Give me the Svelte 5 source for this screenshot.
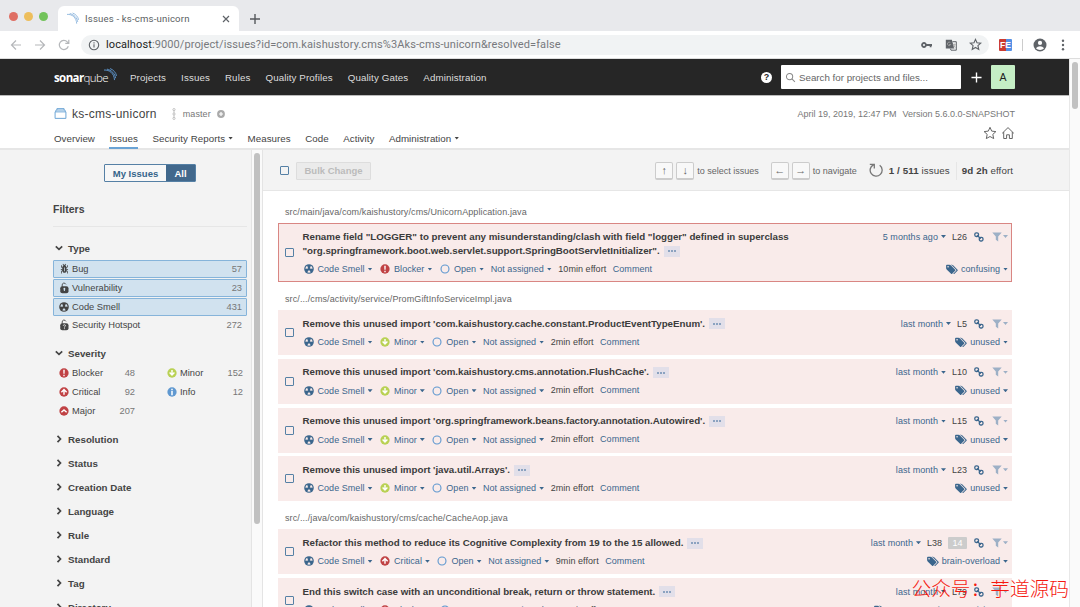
<script>
  const navItems = ['Projects', 'Issues', 'Rules', 'Quality Profiles', 'Quality Gates', 'Administration']

  const tabs = [
    { label: 'Overview' },
    { label: 'Issues', active: true },
    { label: 'Security Reports', menu: true },
    { label: 'Measures' },
    { label: 'Code' },
    { label: 'Activity' },
    { label: 'Administration', menu: true }
  ]

  const types = [
    { icon: 'bug', label: 'Bug', count: 57, active: true },
    { icon: 'vulnerability', label: 'Vulnerability', count: 23, active: true },
    { icon: 'smell', label: 'Code Smell', count: 431, active: true },
    { icon: 'hotspot', label: 'Security Hotspot', count: 272, active: false }
  ]

  const severities = [
    [
      { label: 'Blocker', count: 48 },
      { label: 'Critical', count: 92 },
      { label: 'Major', count: 207 }
    ],
    [
      { label: 'Minor', count: 152 },
      { label: 'Info', count: 12 }
    ]
  ]

  const facets = ['Resolution', 'Status', 'Creation Date', 'Language', 'Rule', 'Standard', 'Tag', 'Directory']

  const unused = (name, line) => ({
    lines: [`Remove this unused import '${name}'.`],
    severity: 'Minor', effort: '2min', age: 'last month', line, tag: 'unused'
  })

  const groups = [
    {
      path: 'src/main/java/com/kaishustory/cms/UnicornApplication.java',
      issues: [
        {
          lines: [
            'Rename field "LOGGER" to prevent any misunderstanding/clash with field "logger" defined in superclass',
            '"org.springframework.boot.web.servlet.support.SpringBootServletInitializer".'
          ],
          severity: 'Blocker', effort: '10min', age: '5 months ago', line: 'L26', tag: 'confusing', selected: true
        }
      ]
    },
    {
      path: 'src/.../cms/activity/service/PromGiftInfoServiceImpl.java',
      issues: [
        unused('com.kaishustory.cache.constant.ProductEventTypeEnum', 'L5'),
        unused('com.kaishustory.cms.annotation.FlushCache', 'L10'),
        unused('org.springframework.beans.factory.annotation.Autowired', 'L15'),
        unused('java.util.Arrays', 'L23')
      ]
    },
    {
      path: 'src/.../java/com/kaishustory/cms/cache/CacheAop.java',
      issues: [
        {
          lines: ['Refactor this method to reduce its Cognitive Complexity from 19 to the 15 allowed.'],
          severity: 'Critical', effort: '9min', age: 'last month', line: 'L38', flows: 14, tag: 'brain-overload'
        },
        {
          lines: ['End this switch case with an unconditional break, return or throw statement.'],
          severity: 'Blocker', effort: '10min', age: 'last month', line: 'L79', tag: 'cert, cwe, misra, suspicious'
        }
      ]
    }
  ]
</script>

{#snippet typeIcon(name)}
  <svg class="icon" viewBox="0 0 16 16" fill="currentColor">
    {#if name === 'bug'}
      <path d="M11 9h1.3l.5.8.8-.5-.8-1.3H11v-.3l2-2.3V3h-1v2l-1 1.2V5c-.1-.8-.7-1.5-1.4-1.9L11 1.8l-.7-.7-1.8 1.6-1.8-1.6-.7.7 1.5 1.3C6.7 3.5 6.1 4.2 6 5v1.1L5 5V3H4v2.3l2 2.3V8H4.2l-.7 1.2.8.5.4-.7H6v.3l-2 1.9V14h1v-2.4l1-1C6 12 7.1 13 8.4 13h.8c.7 0 1.4-.3 1.8-.9.3-.4.3-.9.2-1.4l.9.9V14h1v-2.8l-2-1.9V9zm-2 2H8V6h1v5z" />
    {:else if name === 'smell'}
      <circle cx="8" cy="8" r="6.4" />
      <path class="cut" d="M6.9 7.3 5.5 3.7A5 5 0 0 0 3.2 7.8zM9.1 7.3l1.4-3.600a5 5 0 0 1 2.300 4.100zM8 9.200l-2.400 3.200a5 5 0 0 0 4.800 0z" />
      <circle cx="8" cy="8" r="1" />
    {:else}
      <path d="M5.6 6.2V3.9a2.5 2.5 0 0 1 4.7-1.2" fill="none" stroke="currentColor" stroke-width="1.2" stroke-linecap="round" />
      <rect x="3" y="5.5" width="11" height="9.5" rx="2.8" />
      {#if name === 'vulnerability'}
        <path class="cut" d="M8.5 7.8a1.3 1.3 0 0 1 .7 2.4V12H7.8v-1.8a1.3 1.3 0 0 1 .7-2.4z" />
      {:else}
        <path d="M7 9q.1-1.4 1.5-1.4T10 9q0 .8-1.4 1.5v.9M8.6 12.300v1.200" fill="none" stroke="#f3f3f3" stroke-width="1.1" />
      {/if}
    {/if}
  </svg>
{/snippet}

{#snippet severityIcon(name)}
  <svg class="icon" viewBox="0 0 16 16">
    {#if name === 'Blocker'}
      <circle cx="8" cy="8" r="6.2" fill="#c04244" />
      <path d="M7 3.5h2L8.8 9H7.2zM7.1 10.3h1.8v1.9H7.1z" fill="#fff" />
    {:else if name === 'Critical'}
      <circle cx="8" cy="8" r="6.2" fill="#c04244" />
      <path d="M4.5 8.3 8 4.8l3.5 3.5M8 5.5v6.3" fill="none" stroke="#fff" stroke-width="1.9" />
    {:else if name === 'Major'}
      <circle cx="8" cy="8" r="6.2" fill="#c04244" />
      <path d="M4.5 9.7 8 6.7l3.5 3" fill="none" stroke="#fff" stroke-width="2" />
    {:else if name === 'Minor'}
      <circle cx="8" cy="8" r="6.2" fill="#b9d154" />
      <path d="M4.8 7.4 8 10.600l3.200-3.200M8 4v6" fill="none" stroke="#fff" stroke-width="1.900" />
    {:else}
      <circle cx="8" cy="8" r="6.2" fill="#5f98d0" />
      <path d="M7 3.8h2v1.8H7zM7 6.8h2v5.4H7z" fill="#fff" />
    {/if}
  </svg>
{/snippet}

{#snippet waves()}
  <svg class="waves" viewBox="0 0 14 14" fill="none" stroke="#5f98d0" stroke-width="1">
    <path d="M0 2.2C6 1.7 11 6 11.3 13" />
    <path d="M3.2 1.2C8 2.3 12 6.2 12.5 11" />
    <path d="M6.5.6C10 1.8 13 5 13.5 8.5" />
  </svg>
{/snippet}

<div class="window">
  <div class="tab-strip">
    <div class="lights"><i class="red"></i><i class="yellow"></i><i class="green"></i></div>
    <div class="browser-tab">
      {@render waves()}
      <span>Issues - ks-cms-unicorn</span>
      <svg class="close" viewBox="0 0 8 8"><path d="M1 1l6 6M7 1 1 7" /></svg>
    </div>
    <svg class="new-tab" viewBox="0 0 10 10"><path d="M5 0v10M0 5h10" /></svg>
  </div>

  <div class="address-bar">
    <div class="history">
      <svg viewBox="0 0 12 12"><path d="M11 6H1.5M6 1.5 1.5 6 6 10.5" /></svg>
      <svg viewBox="0 0 12 12"><path d="M1 6h9.5M6 1.5 10.5 6 6 10.5" /></svg>
      <svg viewBox="0 0 12 12"><path d="M10.3 7.3A4.6 4.6 0 1 1 9.3 2.8l1.2 1.2M10.8.8v3.5H7.3" /></svg>
    </div>
    <div class="url">
      <svg class="info" viewBox="0 0 12 12"><circle cx="6" cy="6" r="4.7" /><path d="M6 5.3v3.2M6 3.3v1.1" /></svg>
      <span class="address"><b>localhost</b>:9000/project/issues?id=com.kaishustory.cms%3Aks-cms-unicorn&resolved=false</span>
      <svg class="key" viewBox="0 0 12 8"><circle cx="3" cy="4" r="2" /><path d="M5 4h6M9.6 4v2.2" /></svg>
      <svg class="translate" viewBox="0 0 12 12">
        <path d="M.8.8h6l2.6 8.7H.8z" fill="#5f6368" />
        <path d="M7.5 2.7h3.8v8.5H6l-.6-1.5" fill="none" stroke="#5f6368" />
        <path d="M5.4 3.7a1.7 1.7 0 1 0 .3 1.8H4.1M7.8 5.5h2.8M9.2 4.5v1M10 5.7Q9.5 7.5 8.3 8.5M8.5 6.5l1.8 2" fill="none" stroke="#aaa" stroke-width=".8" />
      </svg>
      <svg class="bookmark" viewBox="0 0 14 14"><path d="m7 1.5 1.6 3.7 4 .4-3 2.7.9 4L7 10.2l-3.5 2.1.9-4-3-2.7 4-.4z" /></svg>
    </div>
    <div class="extension">FE</div>
    <span class="divider"></span>
    <svg class="avatar" viewBox="0 0 14 14">
      <circle cx="7" cy="7" r="6.5" fill="#5f6368" />
      <circle cx="7" cy="4.9" r="2.1" fill="#fff" />
      <path d="M2.9 10.3Q4.5 8.2 7 8.2t4.1 2.1Q9.5 12.1 7 12.1t-4.1-1.8z" fill="#fff" />
    </svg>
    <svg class="kebab" viewBox="0 0 4 12" fill="#5f6368"><circle cx="2" cy="1.7" r="1.2" /><circle cx="2" cy="6" r="1.2" /><circle cx="2" cy="10.3" r="1.2" /></svg>
  </div>

  <div class="viewport">
    <div class="page">
      <nav class="global-nav">
        <div class="logo"><b>sonar</b><span>qube</span>{@render waves()}</div>
        {#each navItems as item}
          <a href="#nav">{item}</a>
        {/each}
        <span class="help">?</span>
        <div class="search">
          <svg viewBox="0 0 12 12"><circle cx="5" cy="5" r="3.4" /><path d="m7.6 7.6 3.2 3.2" /></svg>
          <span>Search for projects and files...</span>
        </div>
        <svg class="plus" viewBox="0 0 12 12"><path d="M6 .5v11M.5 6h11" /></svg>
        <div class="user">A</div>
      </nav>

      <header class="project">
        <div class="project-top">
          <svg class="project-icon" viewBox="0 0 12 12"><path d="M1 4.5h10v6H1zM1.5 4.5l.4-1.700h8.200l.4 1.700M2.700 2.700V1.500h6.600v1.200" /></svg>
          <span class="name">ks-cms-unicorn</span>
          <svg class="branch" viewBox="0 0 6 12"><circle cx="3" cy="1.6" r="1.1" /><circle cx="3" cy="6" r="1.1" /><circle cx="3" cy="10.4" r="1.1" /><path d="M3 2.7v2.2M3 7.1v2.2" /></svg>
          <span class="branch-name">master</span>
          <svg class="branch-add" viewBox="0 0 8 8"><circle cx="4" cy="4" r="3.9" /><path d="M4 2v4M2 4h4" /></svg>
          <span class="version">April 19, 2019, 12:47 PM<span>Version 5.6.0.0-SNAPSHOT</span></span>
        </div>
        <div class="project-tabs">
          {#each tabs as tab}
            <a href="#tab" class:active={tab.active}>{tab.label}{#if tab.menu}<i class="caret"></i>{/if}</a>
          {/each}
          <div class="project-actions">
            <svg viewBox="0 0 14 14"><path d="m7 1.3 1.7 3.8 4.2.5-3.1 2.8.9 4.2L7 10.5l-3.7 2.1.9-4.2L1.1 5.6l4.2-.5z" /></svg>
            <svg viewBox="0 0 14 14"><path d="M1.2 7.3 7 1.6l5.8 5.7M2.7 6v6.5h2.9V8.8h2.8v3.7h2.9V6" /></svg>
          </div>
        </div>
      </header>

      <div class="body">
        <aside>
          <div class="toggle"><button>My Issues</button><button class="on">All</button></div>
          <h2>Filters</h2>
          <h3><svg class="chevron" viewBox="0 0 8 8"><path d="m.8 2.3 3.2 3 3.2-3" /></svg>Type</h3>
          <ul class="types">
            {#each types as type}
              <li class:active={type.active}>{@render typeIcon(type.icon)}{type.label}<em>{type.count}</em></li>
            {/each}
          </ul>
          <h3><svg class="chevron" viewBox="0 0 8 8"><path d="m.8 2.3 3.2 3 3.2-3" /></svg>Severity</h3>
          <div class="severities">
            {#each severities as column}
              <ul>
                {#each column as item}
                  <li>{@render severityIcon(item.label)}{item.label}<em>{item.count}</em></li>
                {/each}
              </ul>
            {/each}
          </div>
          {#each facets as facet}
            <h3 class="closed"><svg class="chevron" viewBox="0 0 8 8"><path d="m2.5.8 3 3.2-3 3.2" /></svg>{facet}</h3>
          {/each}
        </aside>
        <div class="side-scroll"><i></i></div>

        <main>
          <div class="toolbar">
            <i class="checkbox"></i>
            <button class="bulk" disabled>Bulk Change</button>
            <div class="keys">
              <kbd>↑</kbd><kbd>↓</kbd><span>to select issues</span>
              <kbd class="left">←</kbd><kbd>→</kbd><span>to navigate</span>
            </div>
            <svg class="reload" viewBox="0 0 14 14"><path d="M10.7 2.3a6 6 0 1 1-6.3-.5M.8 1.4h4.5v4.2" /></svg>
            <span class="total"><b>1 / 511</b> issues</span>
            <span class="effort-total"><b>9d 2h</b> effort</span>
          </div>

          <div class="list">
            {#each groups as group}
              <p class="path">{group.path}</p>
              {#each group.issues as issue}
                <article class:selected={issue.selected}>
                  <i class="checkbox"></i>
                  <div class="content">
                    <div class="row">
                      <div class="message">
                        {#each issue.lines as line, i}
                          <div>{line}{#if i === issue.lines.length - 1}<span class="more"><i></i><i></i><i></i></span>{/if}</div>
                        {/each}
                      </div>
                      <div class="side">
                        <span class="link">{issue.age}<i class="caret"></i></span>
                        <span>{issue.line}</span>
                        {#if issue.flows}<span class="flows">{issue.flows}</span>{/if}
                        <svg class="chain" viewBox="0 0 10 10"><rect x=".8" y=".8" width="3.7" height="3.7" rx="1.5" /><rect x="5.3" y="5.3" width="3.7" height="3.7" rx="1.5" /><path d="m3.2 3.2 3.500 3.500" /></svg>
                        <span class="filter"><svg viewBox="0 0 10 10"><path d="M.3.5h9.4L6.2 4.5v5L3.8 7.7V4.5z" /></svg><i class="caret"></i></span>
                      </div>
                    </div>
                    <div class="row meta">
                      <span class="link">{@render typeIcon('smell')}Code Smell<i class="caret"></i></span>
                      <span class="link">{@render severityIcon(issue.severity)}{issue.severity}<i class="caret"></i></span>
                      <span class="link"><svg class="icon" viewBox="0 0 16 16"><circle cx="8" cy="8" r="5.3" fill="none" stroke="#5f98d0" stroke-width="1.5" /></svg>Open<i class="caret"></i></span>
                      <span class="link">Not assigned<i class="caret"></i></span>
                      <span class="raised">{issue.effort} effort</span>
                      <span class="link raised">Comment</span>
                      <span class="link tags">
                        <svg viewBox="0 0 1920 1792"><path d="M448 448q0-53-37.500-90.500t-90.500-37.500-90.500 37.500-37.500 90.500 37.500 90.500 90.500 37.500 90.500-37.500 37.500-90.500zm1067 576q0 53-37 90l-491 492q-39 37-91 37-53 0-90-37l-715-716q-38-37-64.500-101t-26.500-117v-416q0-52 38-90t90-38h416q53 0 117 26.500t102 64.500l715 714q37 39 37 91zm384 0q0 53-37 90l-491 492q-39 37-91 37-36 0-59-14t-53-45l470-470q37-37 37-90 0-52-37-91l-715-714q-38-38-102-64.500t-117-26.500h224q53 0 117 26.500t102 64.500l715 714q37 39 37 91z" /></svg>
                        {issue.tag}<i class="caret"></i>
                      </span>
                    </div>
                  </div>
                </article>
              {/each}
            {/each}
          </div>
        </main>
      </div>
    </div>
    <div class="page-scroll"><i></i></div>
  </div>

  <div class="watermark">公众号：芋道源码</div>
</div>

<style>
  :global(body) { margin: 0; background: #fff; }
  .window {
    position: relative; width: 1080px; height: 607px; overflow: hidden; display: flex; flex-direction: column;
    font-family: "Liberation Sans", Arial, sans-serif; font-size: 9.75px; color: #444; background: #fff;
  }
  .window * { box-sizing: border-box; }
  svg { display: block; flex: none; }
  i, em { font-style: normal; }
  a { color: inherit; text-decoration: none; }
  ul { margin: 0; padding: 0; list-style: none; }
  button { font: inherit; padding: 0; }

  /* browser */
  .tab-strip { flex: none; height: 31px; display: flex; align-items: flex-end; background: #e8e9ec; }
  .lights { display: flex; gap: 6px; padding: 0 10px 10px 9px; }
  .lights i { width: 9px; height: 9px; border-radius: 50%; }
  .red { background: #df6f64; }
  .yellow { background: #edbe5c; }
  .green { background: #72c35b; }
  .browser-tab {
    display: flex; align-items: center; width: 181px; height: 25px; padding: 0 9px; background: #fff;
    border-radius: 6px 6px 0 0; font-family: Roboto, sans-serif; font-size: 9.6px; letter-spacing: .17px; color: #5c5f63;
  }
  .waves { width: 13px; height: 13px; }
  .browser-tab .waves { width: 12px; margin-right: 6px; opacity: .75; }
  .close { width: 8px; height: 8px; margin-left: auto; stroke: #5f6368; stroke-width: 1.2; }
  .new-tab { width: 10px; height: 10px; margin: 0 0 7px 11px; stroke: #55585c; stroke-width: 1.4; }
  .address-bar { flex: none; height: 28px; display: flex; align-items: center; padding: 0 12px 0 10px; border-bottom: 1px solid #ddd; }
  .history { display: flex; gap: 12px; width: 71px; fill: none; stroke: #b5b7ba; stroke-width: 1.2; }
  .history svg { width: 12px; height: 12px; }
  .url { display: flex; align-items: center; width: 908px; height: 20px; padding: 0 7px; border-radius: 10px; background: #f1f3f4; }
  .info { width: 12px; height: 12px; fill: none; stroke: #5f6368; stroke-width: 1.1; }
  .address { margin: 0 auto 0 6px; font-family: Roboto, sans-serif; font-size: 11px; letter-spacing: .1px; color: #77797d; }
  .address b { font-weight: 400; color: #222; }
  .key { width: 12px; height: 8px; margin-right: -1px; fill: none; stroke: #5f6368; stroke-width: 1.8; }
  .translate { width: 12px; height: 12px; margin: 0 12px 0 13px; }
  .bookmark { width: 13px; height: 13px; fill: none; stroke: #5f6368; stroke-width: 1.2; }
  .extension {
    width: 13px; height: 12px; margin-left: 10px; text-align: center; line-height: 12px; font-weight: 700; font-size: 8.5px;
    color: #fff; background: linear-gradient(90deg, #cb3b31 50%, #5590e5 50%); border-radius: 1px;
  }
  .divider { width: 1px; height: 12px; margin: 0 10px; background: #ccc; }
  .avatar { width: 14px; height: 14px; }
  .kebab { width: 4px; height: 12px; margin-left: auto; margin-right: 3px; }

  .viewport { flex: 1; min-height: 0; display: flex; }
  .page { width: 1069px; display: flex; flex-direction: column; min-height: 0; }
  .page-scroll { width: 11px; padding: 3px 2px; background: #fafafa; border-left: 1px solid #e8e8e8; }
  .page-scroll i { display: block; width: 6px; height: 47px; border-radius: 3px; background: #c1c1c1; }

  /* SonarQube top bar */
  .global-nav {
    flex: none; display: flex; align-items: center; gap: 15px; height: 37px; padding: 0 54px; background: #262626;
    border-bottom: 1px solid #bbb; color: #ddd; letter-spacing: .11px;
  }
  .logo { display: flex; align-items: center; width: 61px; font-family: "Open Sans", sans-serif; font-size: 11.5px; letter-spacing: -.6px; color: #fff; }
  .logo span { font-weight: 300; }
  .logo .waves { margin: -5px 0 0 -4px; }
  .help {
    width: 11px; height: 11px; margin: 0 -6px 0 auto; border-radius: 50%; background: #fff; color: #262626;
    text-align: center; font-weight: 700; font-size: 9px; line-height: 11px;
  }
  .search {
    display: flex; align-items: center; gap: 3px; width: 180px; height: 24px; margin-right: 1px; padding: 0 4px;
    border-radius: 1px; background: #fff; color: #666; letter-spacing: 0;
  }
  .search svg { width: 11px; height: 11px; fill: none; stroke: #888; stroke-width: 1.1; }
  .plus { width: 11px; height: 11px; margin: 0 -6px; stroke: #fff; stroke-width: 1.5; }
  .user { width: 24px; height: 24px; border-radius: 1px; background: #c5eec5; color: #222; text-align: center; line-height: 24px; font-size: 10.5px; }

  /* project header */
  .project { flex: none; height: 54px; padding: 0 54px; border-bottom: 2px solid #e6e6e6; }
  .project-top { display: flex; align-items: center; height: 35px; }
  .project-icon { width: 13px; height: 13px; fill: none; stroke: #6aa3d5; stroke-width: .9; }
  .name { margin-left: 5px; font-size: 12px; letter-spacing: .24px; }
  .branch { width: 6px; height: 12px; margin: 0 6px 0 14px; fill: none; stroke: #b4b4b4; stroke-width: .8; }
  .branch-name { font-size: 9px; letter-spacing: .1px; color: #777; }
  .branch-add { width: 8px; height: 8px; margin-left: 6px; fill: #aaa; stroke: #fff; stroke-width: 1.2; }
  .branch-add circle { stroke: none; }
  .version { display: flex; gap: 6px; margin-left: auto; font-size: 9px; color: #777; }
  .project-tabs { display: flex; gap: 14.5px; height: 18px; letter-spacing: .04px; }
  .project-tabs a { display: flex; align-items: center; height: 18px; padding-bottom: 2px; border-bottom: 2px solid transparent; }
  .project-tabs .active { border-color: #6aa3d5; }
  .project-actions { display: flex; gap: 4px; margin: -5px 0 0 auto; fill: none; stroke: #666; stroke-width: 1; }
  .project-actions svg { width: 14px; height: 14px; }
  .caret { flex: none; width: 5px; height: 3px; margin-left: 3px; background: currentColor; clip-path: polygon(0 0, 100% 0, 50% 100%); }

  .body { flex: 1; min-height: 0; display: flex; }

  /* facets */
  aside { width: 252px; padding: 14px 4px 0 53px; overflow: hidden; background: #f3f3f3; border-right: 1px solid #e4e4e4; }
  .toggle { display: flex; width: 92px; height: 18px; margin-left: 51px; border: 1px solid #5580a5; border-radius: 1px; }
  .toggle button { flex: 1; border: 0; background: #f7f7f7; color: #35648a; font-weight: 700; font-size: 9.5px; }
  .toggle button:first-child { flex: none; width: 61px; }
  .toggle .on { background: #41688c; color: #fff; }
  h2 { height: 37px; margin: 8px 0 0; padding-top: 12px; border-bottom: 1px solid #e6e6e6; font-size: 10.5px; line-height: 14px; }
  h3 { display: flex; align-items: center; height: 14px; margin: 0; font-size: 9.75px; }
  h2 + h3 { margin-top: 14px; }
  .chevron { width: 8px; height: 8px; margin: 0 5px 0 2px; fill: none; stroke: #444; stroke-width: 1.7; }
  .types { padding: 5px 0 11px; }
  .types li {
    display: flex; align-items: center; height: 18px; margin-bottom: .75px; padding: 0 4px 0 4px;
    border: 1px solid transparent; border-radius: 1px;
  }
  .types li.active { background: #d1e2ef; border-color: #86b4da; }
  li { font-size: 9.3px; }
  .icon { width: 12px; height: 12px; margin-right: 3px; }
  .types .icon { margin-right: 2px; }
  .cut { fill: #d1e2ef; }
  em { margin-left: auto; color: #777; }
  .severities { display: flex; gap: 31px; height: 67px; padding: 4px 5px 0 6px; }
  .severities ul { flex: none; width: 76px; }
  .severities ul + ul { width: 77px; }
  .severities li { display: flex; align-items: center; height: 18.75px; }
  .severities .icon { margin-right: 2px; }
  .severities ul:first-child .icon { margin-left: -1px; }
  .closed { height: 24px; }
  .side-scroll { flex: none; width: 11px; padding: 3px 2px; background: #fafafa; border-right: 1px solid #e4e4e4; }
  .side-scroll i { display: block; width: 6px; height: 371px; border-radius: 3px; background: #c1c1c1; }

  /* issues */
  main { flex: 1; min-width: 0; overflow: hidden; }
  .toolbar { display: flex; align-items: center; height: 41px; padding: 1px 56px 0 17px; background: #f3f3f3; border-bottom: 1px solid #e6e6e6; }
  .checkbox { flex: none; width: 9px; height: 9px; border: 1px solid #5580a5; border-radius: 1px; }
  .bulk { width: 75px; height: 18px; margin-left: 7px; border: 1px solid #ddd; border-radius: 1px; background: #ebebeb; color: #bbb; font-weight: 700; font-size: 9.5px; }
  .keys { display: flex; align-items: center; margin-left: auto; color: #666; font-size: 9px; }
  kbd {
    width: 18px; height: 18px; margin-right: 3px; border: 1px solid #ccc; border-bottom-width: 2px; border-radius: 2px;
    background: #f8f8f8; font: 11px/15px "Liberation Sans", sans-serif; text-align: center;
  }
  kbd.left { margin-left: 12px; }
  .reload { width: 14px; height: 14px; margin: -2px 6px 0 12px; fill: none; stroke: #777; stroke-width: 1.3; }
  .total { padding-right: 6px; border-right: 1px solid #e6e6e6; line-height: 18px; letter-spacing: .1px; }
  .effort-total { padding-left: 5px; letter-spacing: .08px; }
  .list { padding: 13px 57px 0 15px; }
  .path { height: 19px; margin: 0 0 0 7px; font-size: 9px; line-height: 17px; letter-spacing: .1px; color: #666; white-space: nowrap; }
  article { display: flex; align-items: center; height: 45px; margin-bottom: 3.75px; padding-left: 6px; background: #f9ebea; border: 1px solid #f9ebea; }
  article.selected { height: 59px; border-color: #d98683; }
  article + .path { margin-top: 9px; }
  article .cut { fill: #f9ebea; }
  .content { flex: 1; min-width: 0; height: 100%; margin-left: 8.5px; padding: 5.5px 3px 6px 0; display: flex; flex-direction: column; justify-content: space-between; }
  .row { display: flex; font-size: 9px; white-space: nowrap; }
  .message { font-weight: 700; font-size: 9.75px; line-height: 14.5px; color: #3b3b3b; letter-spacing: -.02px; }
  .message > div { height: 14.5px; }
  .more { display: inline-flex; gap: 1px; align-items: center; justify-content: center; width: 16px; height: 11px; margin-left: 4px; vertical-align: middle; background: #e2dfe9; }
  .more i { width: 2px; height: 2px; background: #8ba2c0; }
  .side { display: flex; align-items: center; height: 14px; margin-left: auto; }
  .link { display: inline-flex; align-items: center; color: #3b668d; }
  .side > .link { margin-right: 6px; letter-spacing: .06px; }
  .flows { width: 19px; height: 12px; margin-left: 6px; border-radius: 1px; background: #ccc; color: #fff; text-align: center; line-height: 12px; }
  .chain { width: 10px; height: 10px; margin: 0 8px 0 7px; fill: none; stroke: #3b668d; stroke-width: 1.3; }
  .filter { display: flex; align-items: center; color: #9db0c6; }
  .filter svg { width: 10px; height: 10px; fill: currentColor; }
  .filter .caret { margin-left: 1px; }
  .meta { align-items: center; gap: 6.5px; height: 12px; letter-spacing: .05px; }
  .raised { padding-bottom: 1px; }
  .tags { margin-left: auto; }
  .tags svg { width: 12px; height: 11px; margin-right: 3px; fill: #3b668d; }

  .watermark {
    position: absolute; right: 11px; bottom: 5px; font: 300 19.7px/28px "Noto Sans CJK SC", sans-serif; color: #f5180f; white-space: nowrap;
  }
</style>
